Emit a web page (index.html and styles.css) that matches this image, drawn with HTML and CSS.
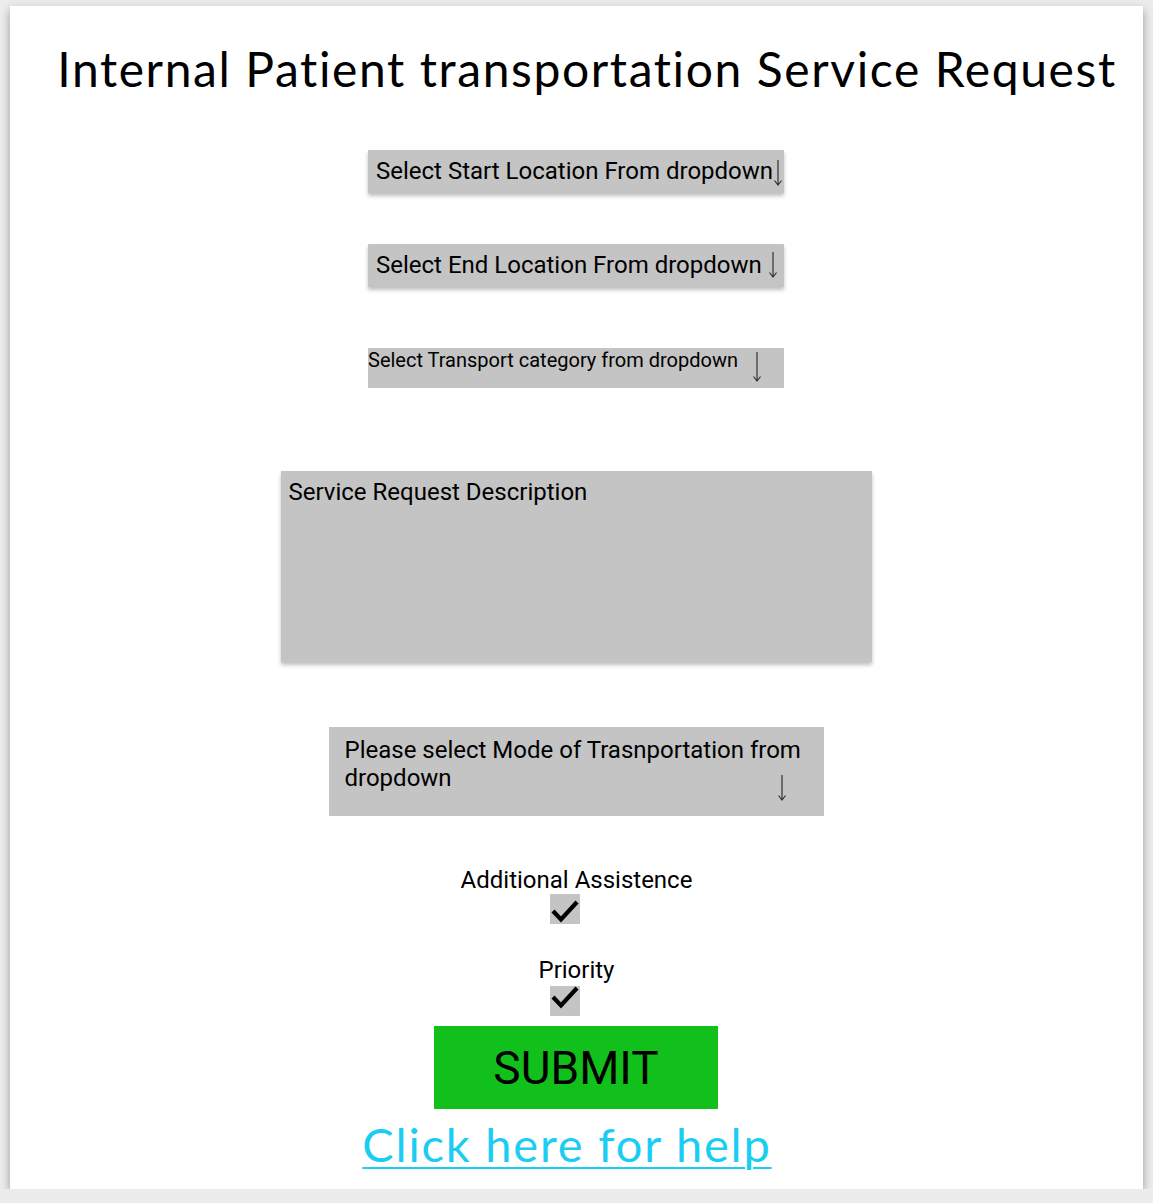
FILE: index.html
```html
<!DOCTYPE html>
<html lang="en">
<head>
<meta charset="utf-8">
<title>Internal Patient transportation Service Request</title>
<link rel="stylesheet" href="styles.css">
</head>
<body>
<main class="card">
  <h1 class="title">Internal Patient transportation Service Request</h1>

  <div class="field dd dd-start">
    <span class="label">Select Start Location From dropdown</span>
    <svg class="arrow" width="10" height="26" viewBox="0 0 10 26"><path d="M5 0V25M1.5 20.5L5 25L8.5 20.5" fill="none" stroke="#333" stroke-width="1.2"/></svg>
  </div>

  <div class="field dd dd-end">
    <span class="label">Select End Location From dropdown</span>
    <svg class="arrow" width="10" height="26" viewBox="0 0 10 26"><path d="M5 0V25M1.5 20.5L5 25L8.5 20.5" fill="none" stroke="#333" stroke-width="1.2"/></svg>
  </div>

  <div class="field dd-cat">
    <span class="label">Select Transport category from dropdown</span>
    <svg class="arrow" width="10" height="30" viewBox="0 0 10 30"><path d="M5 0V29M1.5 24.5L5 29L8.5 24.5" fill="none" stroke="#333" stroke-width="1.2"/></svg>
  </div>

  <div class="field desc">
    <span class="label">Service Request Description</span>
  </div>

  <div class="field mode">
    <span class="label">Please select Mode of Trasnportation from dropdown</span>
    <svg class="arrow" width="10" height="26" viewBox="0 0 10 26"><path d="M5 0V25M1.5 20.5L5 25L8.5 20.5" fill="none" stroke="#333" stroke-width="1.2"/></svg>
  </div>

  <div class="check-label check-label-1">Additional Assistence</div>
  <div class="checkbox cb-1">
    <svg width="30" height="30" viewBox="0 0 30 30"><path d="M3 17L11 25.5L27 8" fill="none" stroke="#000" stroke-width="4.2"/></svg>
  </div>

  <div class="check-label check-label-2">Priority</div>
  <div class="checkbox cb-2">
    <svg width="30" height="30" viewBox="0 0 30 30"><path d="M3 11L11 19.5L27 2" fill="none" stroke="#000" stroke-width="4.2"/></svg>
  </div>

  <button class="submit" type="button">SUBMIT</button>

  <a class="help" href="#">Click here for help</a>
</main>
</body>
</html>
```

FILE: styles.css
```css
html, body {
  margin: 0;
  padding: 0;
}

body {
  background: #ececec;
  font-family: Roboto, "Liberation Sans", Arial, sans-serif;
  color: #000;
}

.card {
  box-sizing: border-box;
  margin: 6px 0 0 10px;
  width: 1133px;
  height: 1183px;
  background: #fff;
  box-shadow: 0 4px 9px rgba(0, 0, 0, 0.35);
  display: flex;
  flex-direction: column;
  align-items: center;
  padding-top: 39px;
}

.title {
  margin: 0;
  padding-left: 21px;
  font-family: Lato, "Open Sans", sans-serif;
  font-weight: 400;
  font-size: 48px;
  line-height: 48px;
  letter-spacing: 1.6px;
  font-variant-ligatures: none;
  white-space: nowrap;
}

.field {
  box-sizing: border-box;
  background: #c4c4c4;
  display: grid;
  margin-right: 1px;
}

.field > * {
  grid-area: 1 / 1;
}

.field .arrow {
  justify-self: end;
  align-self: start;
  display: block;
}

.field .label {
  font-size: 24px;
  line-height: 28px;
  justify-self: start;
  align-self: start;
}

.dd {
  width: 416px;
  height: 43px;
  padding: 7px 0 0 8px;
  box-shadow: 0 3px 4px rgba(0, 0, 0, 0.25);
}

.dd-start {
  margin-top: 57px;
}

.dd-start .arrow {
  margin: 3px 1px 0 0;
}

.dd-end {
  margin-top: 51px;
}

.dd-end .arrow {
  margin: 1px 6px 0 0;
}

.dd-cat {
  width: 416px;
  height: 40px;
  margin-top: 61px;
  padding: 0;
}

.dd-cat .label {
  font-size: 20px;
  line-height: 24px;
}

.dd-cat .arrow {
  margin: 4px 22px 0 0;
}

.desc {
  width: 591px;
  height: 191px;
  margin-top: 83px;
  padding: 7px 0 0 8px;
  box-shadow: 0 3px 4px rgba(0, 0, 0, 0.25);
}

.mode {
  width: 495px;
  height: 89px;
  margin-top: 65px;
  padding: 9px 0 0 16px;
}

.mode .label {
  width: 470px;
}

.mode .arrow {
  margin: 39px 37px 0 0;
}

.check-label {
  font-size: 24px;
  line-height: 20px;
}

.check-label-1 {
  margin-top: 54px;
}

.check-label-2 {
  margin-top: 36px;
}

.checkbox {
  width: 30px;
  height: 30px;
  background: #c4c4c4;
  margin-right: 23px;
}

.checkbox svg {
  display: block;
  overflow: visible;
}

.cb-1 {
  margin-top: 4px;
}

.cb-2 {
  margin-top: 6px;
}

.submit {
  margin-top: 10px;
  margin-right: 1px;
  width: 284px;
  height: 83px;
  border: none;
  padding: 0;
  background: #11c01a;
  color: #000;
  font-family: Roboto, "Liberation Sans", Arial, sans-serif;
  font-size: 46px;
  line-height: normal;
}

.help {
  margin-top: 7px;
  padding-right: 19px;
  font-family: Lato, "Open Sans", sans-serif;
  font-size: 47px;
  line-height: 56px;
  letter-spacing: 1.8px;
  color: #1ccdf3;
  text-decoration: underline;
  text-decoration-thickness: 2px;
  text-underline-offset: 5px;
}
```
